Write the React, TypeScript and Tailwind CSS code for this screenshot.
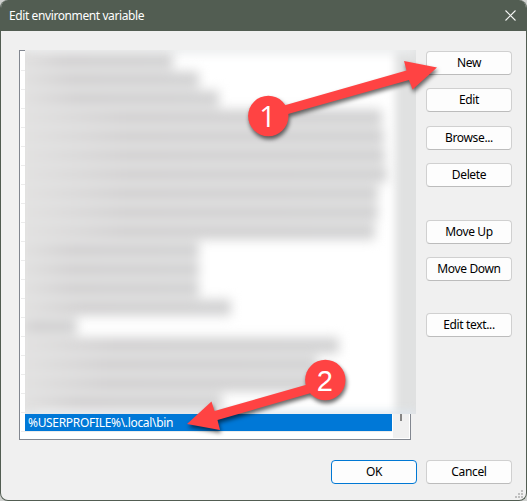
import type { ReactNode } from 'react';

// Each redacted entry is drawn as a soft bar; the number is its length in px.
const redactedRows = [146, 172, 192, 355, 357, 358, 360, 351, 351, 348, 172, 172, 172, 204, 50, 312, 290, 290, 195];

export default function App() {
    return (
        <div className="relative h-[501px] w-[527px] overflow-hidden bg-[#cfd1cf] font-['Noto_Sans','Open_Sans',sans-serif] text-[12px] text-black">
            <div className="flex h-full flex-col overflow-hidden rounded-[8px] border border-t-0 border-[#525d52] bg-[#f0f0f0]">
                <TitleBar />
                <div className="flex h-[409px] pt-[19px] pl-[18px]">
                    <PathList />
                    <div className="ml-[15px] flex flex-col pt-px">
                        <DialogButton>New</DialogButton>
                        <DialogButton className="mt-[13px]">Edit</DialogButton>
                        <DialogButton className="mt-[14px]">Browse...</DialogButton>
                        <DialogButton className="mt-[13px]">Delete</DialogButton>
                        <DialogButton className="mt-[33px]">Move Up</DialogButton>
                        <DialogButton className="mt-[13px]">Move Down</DialogButton>
                        <DialogButton className="mt-[32px]">Edit text...</DialogButton>
                    </div>
                </div>
                <div className="mt-[20px] flex justify-end gap-[9px] pr-[14px]">
                    <DialogButton isDefault>OK</DialogButton>
                    <DialogButton>Cancel</DialogButton>
                </div>
            </div>
            <ResizeGrip />
            <Annotations />
        </div>
    );
}

function TitleBar() {
    return (
        <header className="flex h-[31px] shrink-0 items-center justify-between bg-[#525d52] pr-[10px] pb-px pl-[8px] text-white">
            <h1 className="pt-px text-[12px] tracking-[-0.4px]">Edit environment variable</h1>
            <svg width="11" height="11" viewBox="0 0 11 11" fill="none" stroke="#f4f5f4" strokeWidth="1.1">
                <path d="M0.500 0.500L10.500 10.500M10.500 0.500L0.500 10.500" />
            </svg>
        </header>
    );
}

function PathList() {
    return (
        <div className="relative h-[390px] w-[392px] shrink-0 border border-[#828790] bg-white">
            <div className="flex h-full justify-between pr-px pl-px">
                <div className="flex w-[371px] flex-col pt-[19px]">
                    {Array.from({ length: 19 }, (_, i) => (
                        <div key={i} className="h-[19px] shrink-0 border-t border-[#ececec]" />
                    ))}
                    <div className="h-px shrink-0 bg-[#ececec]" />
                </div>
                <div className="flex h-[387px] w-[16px] justify-center bg-[#f0f0f0]">
                    <div className="h-[370px] w-[2px] bg-[#858585]" />
                </div>
            </div>

            <div className="absolute top-[363px] left-[5px] flex h-[17px] w-[367px] items-center bg-[#0078d7] pl-[3px] text-white">
                <span className="tracking-[-0.32px]">%USERPROFILE%\.local\bin</span>
            </div>

            <div className="absolute -top-px left-[5px] h-[364px] w-[391px] overflow-hidden bg-white">
                <div className="absolute inset-y-0 -left-4 w-[28px] bg-[#e4e3e2] blur-[6px]" />
                <div className="absolute -inset-y-3 -right-3 w-[33px] bg-[#e0e1e1] blur-[4px]" />
                <div className="absolute -top-2 right-0 h-[12px] w-full bg-[#eceeef] blur-[5px]" />
                <div className="absolute right-0 -bottom-2 h-[11px] w-full bg-[#dfe7ee] blur-[5px]" />
                <div className="-ml-2 flex flex-col pt-px blur-[5.5px]">
                    {redactedRows.map((width, i) => (
                        <div key={i} className="flex h-[19px] items-center bg-[#e3e3e3]" style={{ width: width + 10 }}>
                            <div className="h-[9px] w-full bg-linear-to-r from-[#e3e2e1] via-[#cdcbcc] via-30% to-[#cdcdce]" />
                        </div>
                    ))}
                </div>
            </div>
        </div>
    );
}

function DialogButton({ children, className = '', isDefault }: { children: ReactNode; className?: string; isDefault?: boolean }) {
    return (
        <button
            className={`flex h-[24px] w-[86px] shrink-0 items-center justify-center rounded-[4px] border bg-[#fdfdfd] tracking-[-0.35px] ${isDefault ? 'border-[#0078d4]' : 'border-[#d0d0d0] border-b-[#bcbcbc]'} ${className}`}
        >
            {children}
        </button>
    );
}

function ResizeGrip() {
    return (
        <svg className="absolute right-[3px] bottom-[2px]" width="9" height="9" fill="#bfbfbf" shapeRendering="crispEdges">
            <path d="M6 0h2v2h-2zM3 3h2v2h-2zM6 3h2v2h-2zM0 6h2v2h-2zM3 6h2v2h-2zM6 6h2v2h-2z" />
        </svg>
    );
}

function Annotations() {
    return (
        <svg
            className="pointer-events-none absolute inset-0 font-['Liberation_Sans',sans-serif] text-[29px]"
            width="527"
            height="501"
            fill="#ff4343"
        >
            <g className="drop-shadow-[1px_3px_2px_rgba(0,0,0,0.6)]">
                <path d="M270 109.500L406.500 70.500L404 61L437 67.500L412.500 89.500L409 80L272 118.500Z" />
                <circle cx="268.300" cy="116" r="20.200" />
                <path d="M323 380L214.500 411L211.500 401.500L187 424L220 430L217.500 420L325 389Z" />
                <circle cx="325.300" cy="380" r="20.200" />
            </g>
            {/* the "1" is drawn in a face without a foot serif */}
            <text x="267.500" y="126.800" textAnchor="middle" fill="white" className="font-['Open_Sans',sans-serif]">1</text>
            <text x="324.700" y="390.800" textAnchor="middle" fill="white">2</text>
        </svg>
    );
}
